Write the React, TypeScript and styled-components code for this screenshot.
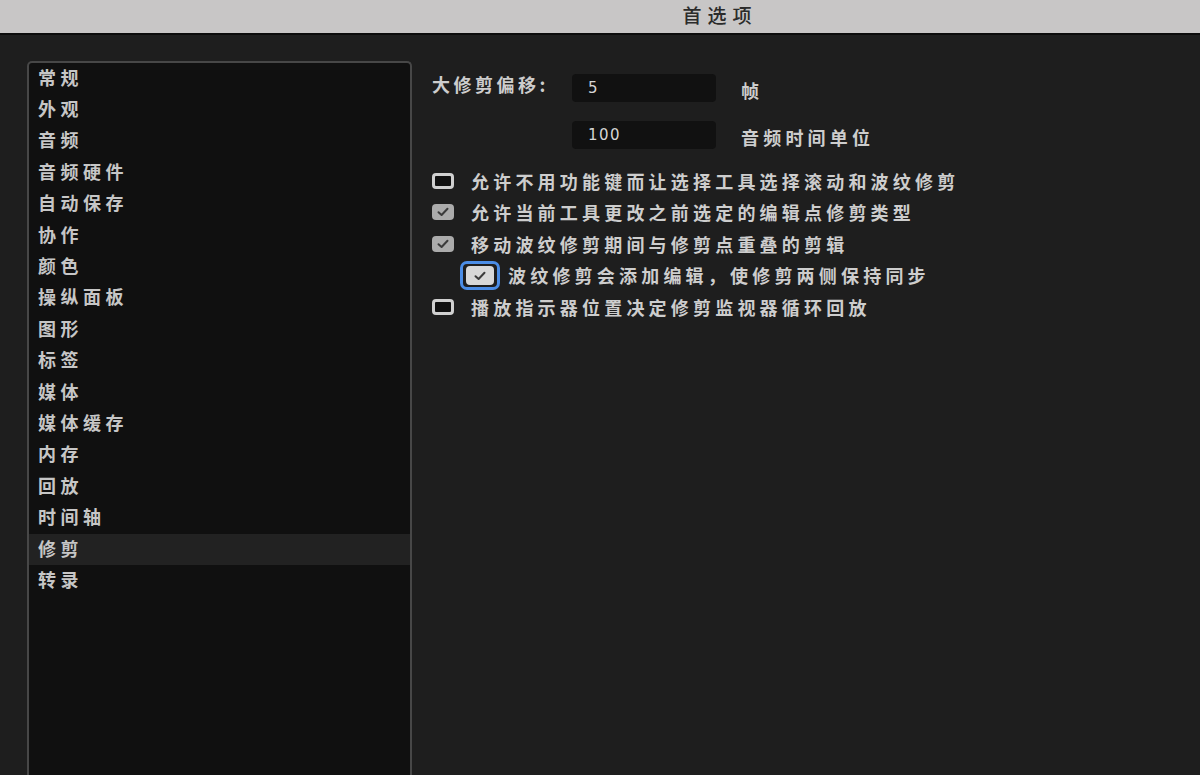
import React from 'react';
import styled, { createGlobalStyle, css } from 'styled-components';

const GlobalStyle = createGlobalStyle`
  html, body {
    margin: 0;
    padding: 0;
    background: #1e1e1e;
    overflow: hidden;
  }
  body {
    font-family: "Noto Sans CJK SC", "Noto Sans", sans-serif;
  }
`;

const Window = styled.div`
  width: 1200px;
  height: 775px;
  display: flex;
  flex-direction: column;
  background: #1e1e1e;
  overflow: hidden;
`;

const TitleBar = styled.div`
  height: 35px;
  box-sizing: border-box;
  flex: none;
  background: #c8c6c6;
  border-bottom: 2px solid #0c0c0c;
  display: flex;
  align-items: center;
  justify-content: center;
  padding: 0 0 5px 240px;
  color: #2b2b2b;
  font-size: 19px;
  letter-spacing: 6px;
  font-weight: 500;
`;

const Body = styled.div`
  flex: 1;
  display: flex;
  gap: 20px;
  padding: 26px 0 0 27px;
  min-height: 0;
`;

const CategoryList = styled.ul`
  width: 381px;
  margin: 0;
  padding: 0;
  list-style: none;
  background: #101010;
  border: 2px solid #474747;
  border-bottom: none;
  border-radius: 5px 5px 0 0;
  flex: none;
`;

const Category = styled.li<{ $active?: boolean }>`
  height: 31.4px;
  display: flex;
  align-items: center;
  padding-left: 9px;
  padding-bottom: 4px;
  box-sizing: border-box;
  color: #c6c6c6;
  font-size: 18px;
  letter-spacing: 4.5px;
  font-weight: 600;
  ${(p) =>
    p.$active &&
    css`
      background: #222222;
    `}
`;

const Settings = styled.div`
  display: flex;
  flex-direction: column;
  padding-top: 13px;
  color: #cdcdcd;
  font-size: 18px;
  letter-spacing: 4.2px;
  font-weight: 600;
`;

const FieldRow = styled.div`
  display: flex;
  align-items: center;
  height: 28px;
  & + & {
    margin-top: 19px;
  }
`;

const FieldLabel = styled.span`
  width: 140px;
  flex: none;
  margin-top: -8px;
  letter-spacing: 3.5px;
`;

const NumberInput = styled.div`
  width: 144px;
  height: 28px;
  box-sizing: border-box;
  padding-left: 16px;
  display: flex;
  align-items: center;
  background: #111111;
  border-radius: 4px;
  font-family: "DejaVu Sans", "Liberation Sans", sans-serif;
  font-size: 15px;
  letter-spacing: 1.5px;
  font-weight: 500;
  color: #d6d6d6;
`;

const Unit = styled.span`
  margin-left: 25px;
  margin-top: 3px;
`;

const Options = styled.div`
  display: flex;
  flex-direction: column;
  margin-top: 16px;
`;

const OptionRow = styled.label<{ $indent?: boolean }>`
  height: 31.5px;
  display: flex;
  align-items: center;
  gap: 17px;
  ${(p) =>
    p.$indent &&
    css`
      padding-left: 28px;
      gap: 8px;
    `}
`;

const Box = styled.span<{ $checked?: boolean; $focused?: boolean }>`
  width: 22px;
  height: 16px;
  box-sizing: border-box;
  flex: none;
  border-radius: 4px;
  display: flex;
  align-items: center;
  justify-content: center;
  border: 3px solid #d0d0d0;
  background: #111111;
  ${(p) =>
    p.$checked &&
    css`
      border: none;
      background: #ababab;
    `}
  ${(p) =>
    p.$focused &&
    css`
      width: 28px;
      height: 19px;
      background: #d8d8d8;
    `}
`;

const FocusRing = styled.span`
  flex: none;
  display: flex;
  padding: 2px 3px;
  border: 3px solid #4b8de6;
  border-radius: 7px;
  margin-top: 1px;
`;

const Check = () => (
  <svg width="12" height="10" viewBox="0 0 12 10">
    <polyline points="1.5,5.2 4.6,8 10.5,1.8" fill="none" stroke="#3b3b3b" strokeWidth="2" strokeLinecap="round" strokeLinejoin="round" />
  </svg>
);

const categories = [
  '常规', '外观', '音频', '音频硬件', '自动保存', '协作', '颜色', '操纵面板', '图形',
  '标签', '媒体', '媒体缓存', '内存', '回放', '时间轴', '修剪', '转录',
];

interface Option {
  text: string;
  checked: boolean;
  indent?: boolean;
}

const options: Option[] = [
  { text: '允许不用功能键而让选择工具选择滚动和波纹修剪', checked: false },
  { text: '允许当前工具更改之前选定的编辑点修剪类型', checked: true },
  { text: '移动波纹修剪期间与修剪点重叠的剪辑', checked: true },
  { text: '波纹修剪会添加编辑，使修剪两侧保持同步', checked: true, indent: true },
  { text: '播放指示器位置决定修剪监视器循环回放', checked: false },
];

export default function App() {
  return (
    <Window>
      <GlobalStyle />
      <TitleBar>首选项</TitleBar>
      <Body>
        <CategoryList>
          {categories.map((c) => (
            <Category key={c} $active={c === '修剪'}>{c}</Category>
          ))}
        </CategoryList>
        <Settings>
          <FieldRow>
            <FieldLabel>大修剪偏移:</FieldLabel>
            <NumberInput>5</NumberInput>
            <Unit>帧</Unit>
          </FieldRow>
          <FieldRow>
            <FieldLabel />
            <NumberInput>100</NumberInput>
            <Unit>音频时间单位</Unit>
          </FieldRow>
          <Options>
            {options.map((o) => (
              <OptionRow key={o.text} $indent={o.indent}>
                {o.indent ? (
                  <FocusRing>
                    <Box $checked $focused>
                      <Check />
                    </Box>
                  </FocusRing>
                ) : (
                  <Box $checked={o.checked}>{o.checked && <Check />}</Box>
                )}
                <span>{o.text}</span>
              </OptionRow>
            ))}
          </Options>
        </Settings>
      </Body>
    </Window>
  );
}
